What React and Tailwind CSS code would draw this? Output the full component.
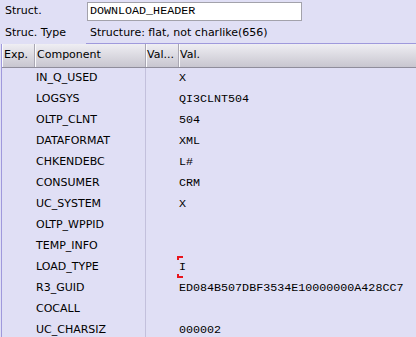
import React from "react";

const rows = [
  ["IN_Q_USED", "X"],
  ["LOGSYS", "QI3CLNT504"],
  ["OLTP_CLNT", "504"],
  ["DATAFORMAT", "XML"],
  ["CHKENDEBC", "L#"],
  ["CONSUMER", "CRM"],
  ["UC_SYSTEM", "X"],
  ["OLTP_WPPID", ""],
  ["TEMP_INFO", ""],
  ["LOAD_TYPE", "I"],
  ["R3_GUID", "ED084B507DBF3534E10000000A428CC7"],
  ["COCALL", ""],
  ["UC_CHARSIZ", "000002"],
];

function App() {
  return (
    <div className="w-[416px] h-[337px] overflow-hidden bg-[#e0dff5] text-black font-['DejaVu_Sans',sans-serif] text-[11px]">
      <div className="flex items-center h-[23px]">
        <div className="w-[87px] pl-[5px]">Struct.</div>
        <div className="w-[215px] h-[19px] bg-white border border-[#a3a2ab] pl-[2px] flex items-center font-['Liberation_Mono',monospace] text-[11.7px]">
          DOWNLOAD_HEADER
        </div>
      </div>
      <div className="flex h-[21px]">
        <div className="w-[86px] pl-[5px] flex items-center">Struc. Type</div>
        <div className="flex-1 pl-[4px] flex items-center border-b border-[#9f99dc]">
          Structure: flat, not charlike(656)
        </div>
      </div>

      <div className="ml-[1px] border-l border-[#9f99dc]">
        <div className="grid grid-cols-[33px_111px_33px_1fr] h-[24px] bg-linear-to-b from-[#efeef3] to-[#c8c6d0] border-b border-[#8f8d9b]">
          <div className="flex items-center pl-[2px] border-r border-[#a9a7b3] shadow-[inset_1px_0_0_#fbfbfd]">Exp.</div>
          <div className="flex items-center pl-[2px] border-r border-[#a9a7b3] shadow-[inset_1px_0_0_#fbfbfd]">Component</div>
          <div className="flex items-center pl-[1px] border-r border-[#a9a7b3] shadow-[inset_1px_0_0_#fbfbfd]">Val...</div>
          <div className="flex items-center pl-[1px] shadow-[inset_1px_0_0_#fbfbfd]">Val.</div>
        </div>
        {rows.map(([name, val], i) => (
          <div key={i} className="grid grid-cols-[33px_111px_33px_1fr] h-[21px]">
            <div></div>
            <div className="flex items-center pl-[1px] border-r border-[#c3c0dc]">{name}</div>
            <div></div>
            <div className="relative flex items-center font-['Liberation_Mono',monospace] text-[11.7px]">
              {val}
              {name === "LOAD_TYPE" && (
                <>
                  <span className="absolute left-[-2px] top-[-1px] w-[6px] h-[4px] border-t-2 border-l-2 border-[#e8141c]"></span>
                  <span className="absolute left-[-2px] bottom-0 w-[6px] h-[4px] border-b-2 border-l-2 border-[#e8141c]"></span>
                </>
              )}
            </div>
          </div>
        ))}
      </div>
    </div>
  );
}

export default App;
